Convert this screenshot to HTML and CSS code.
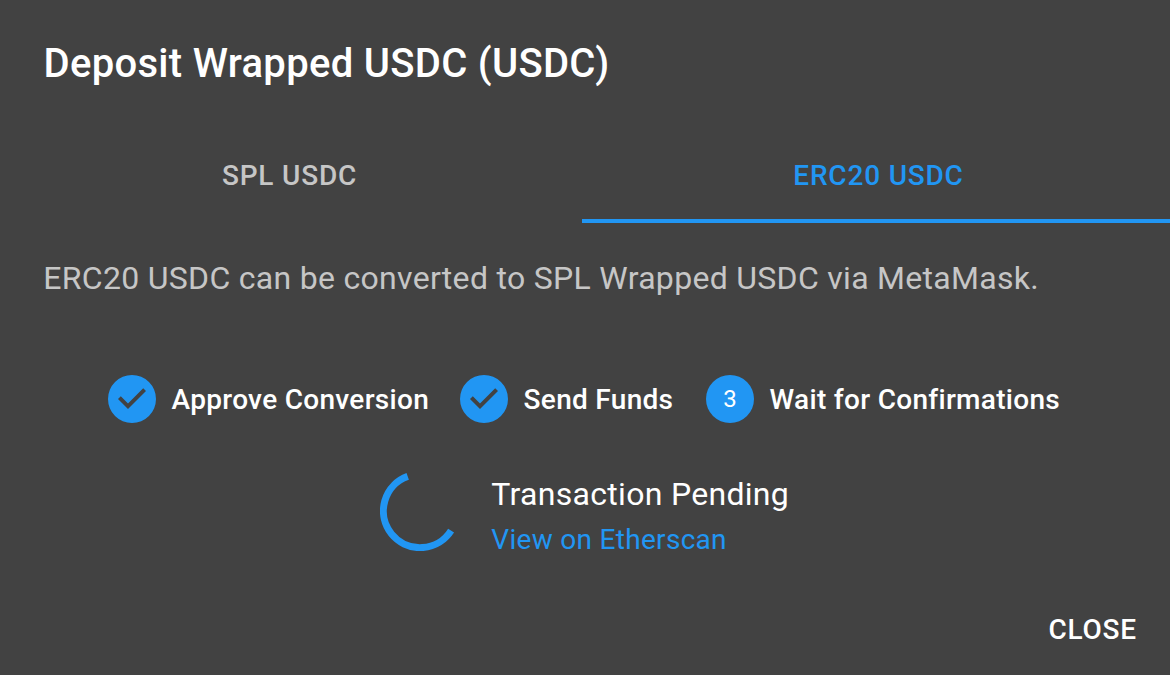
FILE: index.html
```html
<!DOCTYPE html>
<html lang="en">
<head>
<meta charset="utf-8">
<title>Deposit Wrapped USDC</title>
<link rel="stylesheet" href="styles.css">
</head>
<body>
<main class="dialog">
  <h1 class="title">Deposit Wrapped USDC (USDC)</h1>
  <div class="tabs">
    <div class="tab">SPL USDC</div>
    <div class="tab active">ERC20 USDC</div>
  </div>
  <p class="description">ERC20 USDC can be converted to SPL Wrapped USDC via MetaMask.</p>
  <div class="stepper">
    <div class="step">
      <svg class="step-icon" viewBox="0 0 24 24"><path d="M12 0a12 12 0 1 0 0 24 12 12 0 0 0 0-24zm-2 17l-5-5 1.4-1.4 3.6 3.6 7.6-7.6L19 8l-9 9z"/></svg>
      <span class="step-label">Approve Conversion</span>
    </div>
    <div class="step">
      <svg class="step-icon" viewBox="0 0 24 24"><path d="M12 0a12 12 0 1 0 0 24 12 12 0 0 0 0-24zm-2 17l-5-5 1.4-1.4 3.6 3.6 7.6-7.6L19 8l-9 9z"/></svg>
      <span class="step-label">Send Funds</span>
    </div>
    <div class="step">
      <span class="step-icon step-number">3</span>
      <span class="step-label">Wait for Confirmations</span>
    </div>
  </div>
  <div class="pending">
    <svg class="spinner" viewBox="0 0 80 80"><path d="M27.7 5.4A36.7 36.7 0 1 0 71.1 59.6"/></svg>
    <div class="status">
      <div class="status-title">Transaction Pending</div>
      <a class="status-link">View on Etherscan</a>
    </div>
  </div>
  <div class="actions"><button class="close">CLOSE</button></div>
</main>
</body>
</html>
```
FILE: styles.css
```css
body {
  margin: 0;
  background: #424242;
}

.dialog {
  box-sizing: border-box;
  width: 1170px;
  height: 675px;
  overflow: hidden;
  color: #fff;
  font-family: Roboto, sans-serif;
  white-space: nowrap;
}

.title {
  margin: 0;
  padding: 32px 43.5px 0;
  font-size: 40px;
  line-height: 64px;
  font-weight: 500;
  letter-spacing: 0.3px;
}

.tabs {
  display: flex;
  margin-top: 31px;
  margin-left: -6px;
}

.tab {
  box-sizing: border-box;
  width: 588px;
  height: 96px;
  padding: 4px 0 0 3px;
  display: flex;
  align-items: center;
  justify-content: center;
  border-bottom: 4px solid transparent;
  font-size: 28px;
  font-weight: 500;
  letter-spacing: 0.8px;
  color: #c6c6c6;
}

.active {
  padding-left: 5px;
  color: #2196f3;
  border-color: #2196f3;
}

.description {
  margin: 31px 43.3px 0;
  font-size: 32px;
  line-height: 48px;
  letter-spacing: 0.3px;
  color: #c6c6c6;
}

.stepper {
  display: grid;
  grid-template-columns: 320px 214px auto;
  gap: 32px;
  margin: 73px 0 0 108px;
}

.step {
  display: flex;
  align-items: center;
  gap: 15.6px;
}

.step-icon {
  width: 48px;
  height: 48px;
  flex: none;
  fill: #2196f3;
}

.step-number {
  border-radius: 50%;
  background: #2196f3;
  font-size: 24px;
  line-height: 48px;
  text-align: center;
}

.step-label {
  font-size: 28px;
  font-weight: 500;
  letter-spacing: 0.3px;
}

.pending {
  display: flex;
  align-items: flex-start;
  gap: 31.3px;
  margin: 48px 0 0 380px;
}

.spinner {
  width: 80px;
  height: 80px;
  fill: none;
  stroke: #2196f3;
  stroke-width: 7;
}

.status-title {
  font-size: 32px;
  line-height: 46px;
  letter-spacing: 0.3px;
}

.status-link {
  display: block;
  font-size: 28px;
  line-height: 46px;
  letter-spacing: 0.3px;
  color: #2196f3;
}

.actions {
  display: flex;
  justify-content: flex-end;
  margin: 32px 33px 0 0;
}

.close {
  padding: 0;
  border: 0;
  background: none;
  color: #fff;
  font: 500 28px/70px Roboto, sans-serif;
  letter-spacing: 0.8px;
}
```
